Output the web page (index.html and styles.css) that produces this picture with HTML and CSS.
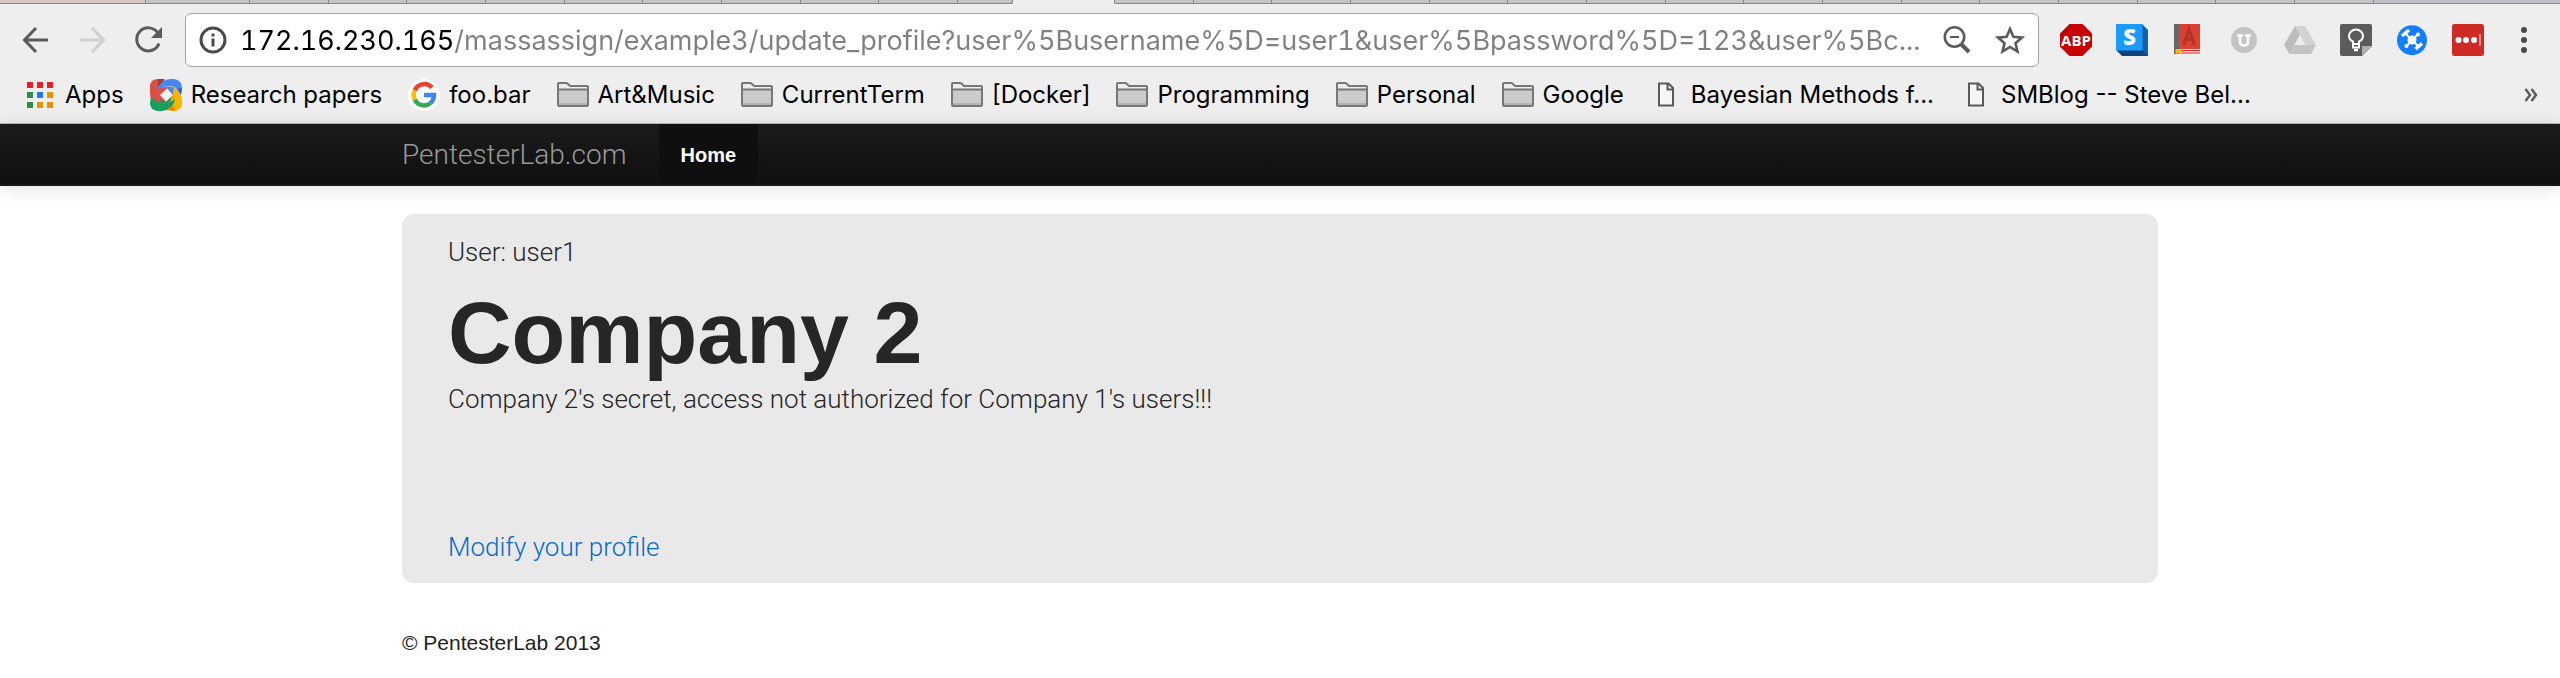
FILE: index.html
```
<!DOCTYPE html>
<html lang="en">
<head>
<meta charset="utf-8">
<title>PentesterLab.com</title>
<link rel="stylesheet" href="styles.css">
</head>
<body>
<svg class="defs" aria-hidden="true">
  <symbol id="folder" viewBox="0 0 32 32">
    <path d="M1 28V5.500Q1 3.500 3 3.500H10L13.500 7H29Q31 7 31 9V28Z" fill="#ededed"/>
    <path d="M1 11H31V26H1Z" fill="#cbcbcb"/><path d="M1 24H31V26.500H1Z" fill="#b2b2b2"/>
    <path d="M1 10.500H31M1 25.500V5Q1 4 2 4H9Q10 4 11 5L13 7H30Q31 7 31 8V25.500Q31 27 30 27H2Q1 27 1 25.500Z" fill="none" stroke="#777" stroke-width="2"/>
  </symbol>
  <symbol id="page" viewBox="0 0 32 32">
    <path d="M9 4.500H18.500L23 9V26.500H9ZM17.500 5V10.500H23" fill="#f6f6f6" stroke="#5a5a5a" stroke-width="2"/>
  </symbol>
</svg>
<div class="tabs" aria-hidden="true">
  <i class="tab first"></i><i class="tab wide"></i><i class="tab"></i><i class="tab"></i><i class="tab"></i><i class="tab"></i><i class="tab"></i><i class="tab"></i><i class="tab"></i><i class="tab"></i><i class="tab"></i><i class="tab short"></i><i class="tab active"></i><i class="tab"></i><i class="tab"></i><i class="tab"></i><i class="tab"></i><i class="tab"></i><i class="tab"></i><i class="tab"></i><i class="tab"></i><i class="tab"></i><i class="tab"></i><i class="tab"></i><i class="tab"></i><i class="tab"></i><i class="tab"></i><i class="tab"></i><i class="tab"></i><i class="tab last"></i>
</div>
<header class="chrome">
  <div class="toolbar">
    <button class="icon" aria-label="Back"><svg viewBox="0 0 32 32"><path d="M28 16H5M16 4L4.500 16L16 28" fill="none" stroke="#5a5a5a" stroke-width="3"/></svg></button>
    <button class="icon" aria-label="Forward"><svg viewBox="0 0 32 32"><path d="M4 16H27M16 4L27.500 16L16 28" fill="none" stroke="#d0d0d0" stroke-width="3"/></svg></button>
    <button class="icon" aria-label="Reload"><svg viewBox="0 0 32 32"><path d="M25.500 8.500A11.500 11.500 0 1 0 27 19.500" fill="none" stroke="#5a5a5a" stroke-width="3"/><path d="M30 3V14H19Z" fill="#5a5a5a"/></svg></button>
    <div class="omnibox">
      <button class="icon" aria-label="Site information"><svg viewBox="0 0 32 32"><circle cx="16" cy="16" r="12" fill="none" stroke="#4a4a4a" stroke-width="3"/><path d="M14.500 9.500h3v3h-3zM14.500 14.500h3v8h-3z" fill="#4a4a4a"/></svg></button>
      <input class="url" type="text" aria-label="Address" value="172.16.230.165/massassign/example3/update_profile?user%5Busername%5D=user1&amp;user%5Bpassword%5D=123&amp;user%5Bc...">
      <button class="icon" aria-label="Zoom"><svg viewBox="0 0 32 32"><circle cx="13.500" cy="13" r="9.700" fill="none" stroke="#5a5a5a" stroke-width="2.600"/><path d="M9 13h9" stroke="#5a5a5a" stroke-width="2"/><path d="M20.500 20.500L28 28" stroke="#5a5a5a" stroke-width="4"/></svg></button>
      <button class="icon" aria-label="Bookmark this page"><svg viewBox="0 0 32 32"><path d="M16 5L19.400 12.700L28 13.600L21.500 19.200L23.500 27.500L16 23L8.500 27.500L10.500 19.200L4 13.600L12.600 12.700Z" fill="none" stroke="#5a5a5a" stroke-width="2.600"/></svg></button>
    </div>
    <button class="icon" aria-label="Adblock Plus"><svg viewBox="0 0 32 32"><path d="M9.500 0H22.500L32 9.500V22.500L22.500 32H9.500L0 22.500V9.500Z" fill="#c70000"/><text class="abp" x="16" y="22">ABP</text></svg></button>
    <button class="icon" aria-label="Stylish"><svg viewBox="0 0 32 32"><path d="M26 0L32 6V32H26Z" fill="#0f62a8"/><path d="M0 26H26L32 32H6Z" fill="#0b4579"/><path d="M0 0H26.500V26.500H0Z" fill="#1a9bff"/><text class="letter" x="13.500" y="21">S</text></svg></button>
    <button class="icon" aria-label="Dictionary"><svg viewBox="0 0 32 32"><path d="M2 0H7V30H2Z" fill="#666"/><path d="M7 0H28V25H7Z" fill="#da4132"/><path d="M7 25H28V29H7Z" fill="#e5e5e5"/><path d="M10 26.500H28M10 29H28" stroke="#d22" stroke-width="1.200"/><path d="M11.500 21L17 5L22.500 21M13.500 15.500H20.500" fill="none" stroke="#b33327" stroke-width="3"/><path d="M3.500 25H10V31L7 28.500L3.500 31Z" fill="#f4b81c"/></svg></button>
    <button class="icon" aria-label="Shortener"><svg viewBox="0 0 32 32"><circle cx="16" cy="16" r="13" fill="#c4c4c4"/><path d="M9 11.500H15M17 11.500H23M12 12V17Q12 21.500 16 21.500Q20 21.500 20 17V12" fill="none" stroke="#fff" stroke-width="2.600"/></svg></button>
    <button class="icon" aria-label="Google Drive"><svg viewBox="0 0 32 32"><path d="M11 2H21L16 11L5.500 30L0 21Z" fill="#bdbdbd"/><path d="M11 2H21L32 21H21.500Z" fill="#d2d2d2"/><path d="M10.500 21H32L27 30H5.500Z" fill="#c4c4c4"/><path d="M16 11.500L21.500 21H10.500Z" fill="#eee"/></svg></button>
    <button class="icon" aria-label="Google Keep"><svg viewBox="0 0 32 32"><path d="M2 0H30Q32 0 32 2V22L22 32H2Q0 32 0 30V2Q0 0 2 0Z" fill="#5b5b5b"/><path d="M22 32V22H32Z" fill="#b0b0b0"/><path d="M13 20V17.500Q9 15.500 9 12A7 6.500 0 0 1 23 12Q23 15.500 19 17.500V20ZM13 20V23.500H19V20" fill="none" stroke="#fff" stroke-width="2"/><path d="M14 26H18" stroke="#fff" stroke-width="2.500"/></svg></button>
    <button class="icon" aria-label="Network helper"><svg viewBox="0 0 32 32"><circle cx="16" cy="16.200" r="15" fill="#147efb"/><path d="M9 9L23 23M22 10L10.500 22" stroke="#fff" stroke-width="2"/><circle cx="16" cy="16" r="4.500" fill="#fff"/><circle cx="22" cy="10.500" r="2" fill="#fff"/><circle cx="10.500" cy="22" r="2" fill="#fff"/><path d="M6 12L13 6M19.500 25L26 19.500" stroke="#fff" stroke-width="3.500"/></svg></button>
    <button class="icon" aria-label="LastPass"><svg viewBox="0 0 32 32"><rect width="32" height="32" rx="2.500" fill="#ce2a26"/><circle cx="6.500" cy="16" r="3" fill="#fff"/><circle cx="14" cy="16" r="3" fill="#fff"/><circle cx="22" cy="16" r="3" fill="#fff"/><path d="M28 10V22" stroke="#f0b0ae" stroke-width="1.500"/></svg></button>
    <button class="icon" aria-label="Menu"><svg viewBox="0 0 32 32"><g fill="#4a4a4a"><circle cx="16" cy="6" r="3"/><circle cx="16" cy="16" r="3"/><circle cx="16" cy="26" r="3"/></g></svg></button>
  </div>
  <nav class="bookmarks" aria-label="Bookmarks">
    <a class="mark" href="#"><svg class="glyph" viewBox="0 0 32 32"><path d="M3 3H9V9H3zM13 3H19V9H13zM23 3H29V9H23z" fill="#ee1c25"/><path d="M3 13H9V19H3zM3 23H9V29H3z" fill="#2f8f46"/><path d="M13 13H19V19H13z" fill="#1e78f5"/><path d="M23 13H29V19H23zM13 23H19V29H13zM23 23H29V29H23z" fill="#e89200"/></svg>Apps</a>
    <a class="mark" href="#"><svg class="glyph" viewBox="0 0 32 32"><path d="M8 0Q13 0 17 4L8 13Q9 20 13 24L8 29Q0 22 0 14V8Q0 0 8 0Z" fill="#da4f42"/><path d="M7 9Q10 1 20 0H24Q32 1 32 9L31 15Q28 10 24 8Q16 5 7 11Z" fill="#4787f4"/><path d="M8 0H15L8 8Z" fill="#a93a30"/><path d="M22 7Q30 11 32 20V25Q31 32 24 32L18 30Q22 26 23 19Q24 13 22 7Z" fill="#f7b500"/><path d="M1 17Q4 23 11 24Q18 25 25 20Q23 31 12 32H8Q0 31 0 24Z" fill="#12a05c"/><path d="M16 31L23 26L25 32Z" fill="#ee8100"/><path d="M27 10L32 9L31 16Z" fill="#2f5fc4"/><path d="M8 11L14 8H23L24 19L18 24H11Q8 19 8 11Z" fill="#da4f42"/><path d="M13 8Q19 6 24 9L24 17L17 9.500Z" fill="#4787f4"/><path d="M23 9Q25 15 23 20L16 24L23 16Z" fill="#f7b500"/><path d="M9 20L16 22.500L22 18L20 23L12 25Z" fill="#12a05c"/><path d="M17 9.500L23 16L16 22.500L10 16Z" fill="#f3f3f3"/></svg>Research papers</a>
    <a class="mark" href="#"><svg class="glyph" viewBox="0 0 32 32"><circle cx="16" cy="16" r="16" fill="#fff"/><g fill="none" stroke-width="4.500"><path d="M24 8.500A10.300 10.300 0 0 0 6.800 11.300" stroke="#ea4335"/><path d="M6.800 11.300A10.300 10.300 0 0 0 6.800 20.700" stroke="#fbbc05"/><path d="M6.800 20.700A10.300 10.300 0 0 0 22.600 24" stroke="#34a853"/><path d="M22.600 24Q26 21 26 16H16" stroke="#4285f4"/></g></svg>foo.bar</a>
    <a class="mark" href="#"><svg class="glyph"><use href="#folder"/></svg>Art&amp;Music</a>
    <a class="mark" href="#"><svg class="glyph"><use href="#folder"/></svg>CurrentTerm</a>
    <a class="mark" href="#"><svg class="glyph"><use href="#folder"/></svg>[Docker]</a>
    <a class="mark" href="#"><svg class="glyph"><use href="#folder"/></svg>Programming</a>
    <a class="mark" href="#"><svg class="glyph"><use href="#folder"/></svg>Personal</a>
    <a class="mark" href="#"><svg class="glyph"><use href="#folder"/></svg>Google</a>
    <a class="mark" href="#"><svg class="glyph"><use href="#page"/></svg>Bayesian Methods f...</a>
    <a class="mark" href="#"><svg class="glyph"><use href="#page"/></svg>SMBlog -- Steve Bel...</a>
    <button class="more" aria-label="More bookmarks"><svg viewBox="0 0 14 14"><path d="M1.500 1L6 7L1.500 13M7.500 1L12 7L7.500 13" fill="none" stroke="#5a5a5a" stroke-width="2.400"/></svg></button>
  </nav>
</header>
<nav class="navbar">
  <div class="container navbar-inner">
    <a class="brand" href="#">PentesterLab.com</a>
    <a class="nav-link" href="#">Home</a>
  </div>
</nav>
<main class="container">
  <section class="hero">
    <p class="user">User: user1</p>
    <h1>Company 2</h1>
    <p>Company 2's secret, access not authorized for Company 1's users!!!</p>
    <p class="modify"><a href="#">Modify your profile</a></p>
  </section>
  <footer>© PentesterLab 2013</footer>
</main>
</body>
</html>
```
FILE: styles.css
```
* { box-sizing: border-box; }
body { margin: 0; background: #fff; color: #262626; font-family: "Liberation Sans", Arial, sans-serif; }
a { text-decoration: none; }
button { padding: 0; border: 0; background: none; }
svg { display: block; overflow: visible; }
.defs { display: none; }

.tabs { display: flex; height: 4px; overflow: hidden; background: #c4c4c4; }
.tab { flex: 78 0 0; border-right: 1px solid #888; border-bottom: 1px solid #888; }
.tab.first { flex-grow: 146; background: #d9c5c0; }
.tab.wide { flex-grow: 103; }
.tab.short { flex-grow: 54; border-bottom-right-radius: 3px; }
.tab.active { flex-grow: 102; background: #eee; border-bottom-color: #eee; }
.tab.last { flex-grow: 187; background: #c0c3ca; border-right: 0; }

.chrome { background: #eee; border-bottom: 1px solid #b9b9b9; }
.toolbar { display: flex; align-items: center; gap: 24px; padding: 9px 20px 4px; }
.icon { flex: none; width: 32px; height: 32px; }
.icon svg { width: 32px; height: 32px; }
.omnibox { display: flex; align-items: center; flex: 1; min-width: 0; height: 54px; margin: 0 -3px; padding: 0 12px 0 11px; gap: 21px; background: #fff; border: 1px solid #a3a3a3; border-radius: 6px; }
.url { flex: 1; min-width: 0; height: 48px; margin: 2px -20px 0 -10px; padding: 0; border: 0; outline: 0; font: 27px/48px Inter, sans-serif; font-variant-numeric: tabular-nums; color: transparent; caret-color: #000; background: linear-gradient(90deg, #000 212px, #808080 212px); background-clip: text; -webkit-background-clip: text; }
.abp { font: bold 15px "Open Sans", sans-serif; fill: #fff; text-anchor: middle; }
.letter { font: 800 22px "Open Sans", sans-serif; fill: #fff; text-anchor: middle; }

.bookmarks { display: flex; align-items: center; gap: 26px; height: 52px; padding: 0 22px 4px 24px; }
.mark { display: flex; align-items: center; gap: 9px; flex: none; font: 24px/32px Inter, sans-serif; color: #000; }
.glyph { width: 32px; height: 32px; }
.more { margin-left: auto; }
.more svg { width: 14px; height: 14px; }

.container { width: calc(100% - 40px); max-width: 1756px; margin: 0 auto; }
.navbar { background: linear-gradient(#1b1b1b, #0f0f0f); border-bottom: 2px solid #181818; box-shadow: 0 2px 20px rgba(0, 0, 0, 0.12); }
.navbar-inner { display: flex; gap: 32px; height: 60px; line-height: 62px; }
.brand { font-family: Roboto, sans-serif; font-weight: 300; font-size: 28px; color: #999; }
.nav-link { padding: 0 22px; background: #0f0f0f; color: #fff; font-weight: bold; font-size: 20px; }

.hero { margin-top: 28px; padding: 18px 46px 16px; background: #e9e9e9; border-radius: 12px; }
.hero p { margin: 0; font: 300 26px/40px Roboto, sans-serif; }
.hero .user { margin-bottom: 17px; }
.hero h1 { margin: 0 0 2px; font-size: 88px; line-height: 88px; }
.hero .modify { margin-top: 108px; }
.hero a { color: #0a6ac8; }
footer { margin-top: 40px; font-size: 21px; line-height: 40px; color: #222; }
```
